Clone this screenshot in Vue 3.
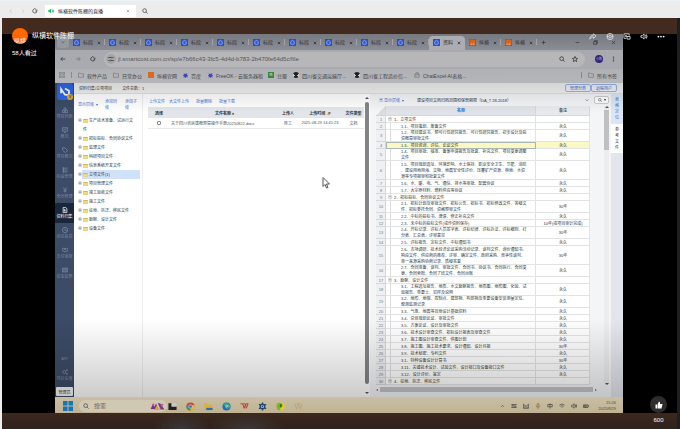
<script setup>
import { ref } from 'vue'

const icons = {
  back: 'M14 8H2M7 3L2 8l5 5',
  forward: 'M2 8h12M9 3l5 5-5 5',
  chevLeft: 'M10 3L5 8l5 5',
  chevRight: 'M6 3l5 5-5 5',
  chevDown: 'M3 6l5 5 5-5',
  chevUp: 'M3 11l5-5 5 5',
  reload: 'M13 4v4H9M13 8a5.5 5.5 0 1 1-2-4.5',
  search: 'M7 2a5 5 0 1 0 0 10A5 5 0 1 0 7 2M11 11l4 4',
  close: 'M3 3l10 10M13 3L3 13',
  plus: 'M8 2v12M2 8h12',
  minus: 'M2 8h12',
  restore: 'M2 5h9v9H2zM5 5V2h9v9h-3',
  star: 'M8 1l2 5 5 .5-4 3.500 1.500 5L8 12l-4.500 3L5 10 1 6.500 6 6z',
  folder: 'M1 3h5l2 2h7v9H1z',
  apps: 'M1 1h5v5H1zM10 1h5v5h-5zM1 10h5v5H1zM10 10h5v5h-5z',
  tune: 'M1 4h7M12 4h3M10 2v4M1 12h3M8 12h7M6 10v4',
  sites: 'M8 1l4 5H4zM1 9h6v6H1zM9 9h6v6H9z',
  chart: 'M1 2h14v9H1zM4 8l3-3 2 2 3-4M5 14h6',
  tag: 'M1 2h6l8 7-6 6-8-7zM4 5h1',
  list: 'M1 3h14M1 8h14M1 13h14M4 1v14',
  yen: 'M3 1l5 6 5-6M8 7v8M4 8h8M4 11h8',
  doc: 'M3 1h7l3 4v10H3zM6 5v6h4M6 8h4',
  clock: 'M8 1a7 7 0 1 0 0 14A7 7 0 1 0 8 1M8 4v5h4',
  hands: 'M0 5l5-2 3 2 3-2 5 2v5l-5 2-3 1-4-2-4-1zM5 8l3-3 4 4',
  money: 'M1 3h14v10H1zM5 3v10M11 3v10M8 6v4',
  gear: 'M6 4a4 4 0 1 0 0 8A4 4 0 1 0 6 4M13 1a2 2 0 1 0 0 4A2 2 0 1 0 13 1M13 11a2 2 0 1 0 0 4A2 2 0 1 0 13 11',
  share: 'M9 2l6 5-6 5V9C5 9 3 10 1 14c0-5 3-9 8-9z',
  target: 'M8 1a7 7 0 1 0 0 14A7 7 0 1 0 8 1M8 5a3 3 0 1 0 0 6A3 3 0 1 0 8 5M1 8h3M12 8h3',
  pip: 'M6 12H1V2h12v4M8 8h7v6H8zM4 5l3 3M7 5v3H4',
  speaker: 'M1 6h3l4-4v12l-4-4H1zM11 5q3 3 0 6M13 3q4 5 0 10',
  keyboard: 'M1 4h14M1 8h14M1 12h14M5 4v4M11 8v4',
  mail: 'M1 3l7 6 7-6v11H1zM5 14V9M11 14V9',
  mic: 'M6 2q2-2 4 0v6q-2 3-4 0zM3 7q1 5 5 5t5-5M8 12v4',
  ime: 'M2 4h12v6H2zM8 1v14',
  wifi: 'M1 6q7-7 14 0M4 9q4-4 8 0M7 12l1 1 1-1',
  battery: 'M1 5h12v7H1zM13 7h2v3M3 7h6v3H3z',
}

const tabs = [
  ...Array.from({ length: 10 }, () => ({ title: '标段', kind: 'blue' })),
  { title: '资料', kind: 'blue', active: true },
  { title: '纵横', kind: 'orange' },
  { title: '纵横', kind: 'orange' },
]

const nav = [
  { icon: 'sites', label: '项目列表' },
  { icon: 'chart', label: '概况' },
  { icon: 'tag', label: '项目概况' },
  { icon: 'list', label: '标段管理' },
  { icon: 'yen', label: '合同管理' },
  { icon: 'doc', label: '资料归集', active: true },
  { icon: 'clock', label: '动态投资' },
  { icon: 'hands', label: '支付审批' },
  { icon: 'money', label: '资金监管' },
]

const tree = [
  '生产技术准备、试运行文\n件', '招标投标、合同协议文件', '监理文件', '科研项目文件',
  '信息系统开发文件', '立项文件(1)', '项目管理文件', '竣工验收文件', '施工文件',
  '征地、拆迁、移民文件', '勘察、设计文件', '设备文件',
]

const Y = '永久'
const T = '30年'
const rows = [
  ['1、立项文件'],
  ['1.1、项目策划、筹备文件', Y],
  ['1.2、项目建议书、预可行性研究报告、可行性研究报告、初步设计及投\n资概算审批文件', Y],
  ['1.3、项目咨询、评估、论证文件', Y],
  ['1.4、项目审批、核准、备案申请报告及批复、补充文件、项目变更调整\n文件', Y],
  ['1.5、项目规划选址、环境影响、水土保持、职业安全卫生、节能、消防\n、建设用地用海、文物、地震安全性评价、压覆矿产资源、林地、水资\n源等专项报审和批复文件', Y],
  ['1.6、水、暖、电、气、通信、排水等审批、配套协议', Y],
  ['1.7、大宗原材料、燃料供应等协议', Y],
  ['2、招标投标、合同协议文件'],
  ['2.1、招标计划及审批文件、招标公告、招标书、招标修改文件、答疑文\n件、招标委托合同、资格预审文件', T],
  ['2.2、中标的投标书、澄清、修正补充文件', Y],
  ['2.3、未中标的投标文件(或作资料保存)', '10年(或项目审计完成)'],
  ['2.4、开标记录、评标人员签字表、评标纪律、评标办法、评标细则、打\n分表、汇总表、评审意见', T],
  ['2.5、评标报告、定标文件、中标通知书', Y],
  ['2.6、市场调研、技术经济论证采购活动记录、谈判文件、询价通知书、\n响应文件、供应商的推荐、评审、确定文件、政府采购、竞争性谈判、\n单一来源采购协商记录、质疑答复', T],
  ['2.7、合同准备、谈判、审批文件、合同书、协议书、合同执行、合同变\n更、合同索赔、合同了结文件、合同台账', Y],
  ['3、勘察、设计文件'],
  ['3.1、工程选址报告、地质、水文勘察报告、地质图、地形图、化验、试\n验报告、重要土、岩样及说明', Y],
  ['3.2、地形、地貌、控制点、建筑物、构筑物及重要设备安装测量定位、\n观测监测记录', Y],
  ['3.3、气象、地震等其他设计基础资料', Y],
  ['3.4、总体规划论证、审批文件', Y],
  ['3.5、方案论证、设计及审批文件', Y],
  ['3.6、技术设计审查文件、招标设计报表及审查文件', Y],
  ['3.7、施工图设计审查文件、供图计划', Y],
  ['3.8、施工图、施工技术要求、设计通知、设计月报', T],
  ['3.9、技术秘密、专利文件', Y],
  ['3.1、特种设备设计计算书', T],
  ['3.11、关键技术设计、试验文件、设计接口及设备接口文件', Y],
  ['3.12、设计评价、鉴定', Y],
  ['4、征地、拆迁、移民文件'],
]

const tray = ['chevUp', 'keyboard', 'mail', 'mic', 'ime', 'wifi', 'speaker', 'battery']
const liveTools = ['share', 'target', 'pip', 'speaker']
const lineCount = (text) => text.split('\n').length
const checked = ref(false)
const url = ref('jl.smartcost.com.cn/sp/e7b66c43-3fc5-4d4d-b783-2b470fe64d5c/file')
</script>

<template>
  <div class="page">
    <header class="topbar">
      <button class="ic pale" aria-label="后退"><svg viewBox="0 0 16 16"><path :d="icons.chevLeft" /></svg></button>
      <button class="ic pale" aria-label="前进"><svg viewBox="0 0 16 16"><path :d="icons.chevRight" /></svg></button>
      <button class="ic" aria-label="刷新"><svg viewBox="0 0 16 16"><path :d="icons.reload" /></svg></button>
      <div class="live-tab">
        <svg class="sound" viewBox="0 0 16 16"><path :d="icons.speaker" /></svg>
        <span>纵横软件陈棚的直播</span>
        <button class="ic small" aria-label="关闭"><svg viewBox="0 0 16 16"><path :d="icons.close" /></svg></button>
      </div>
      <button class="ic" aria-label="搜索"><svg viewBox="0 0 16 16"><path :d="icons.search" /></svg></button>
    </header>

    <main class="player">
      <section class="screen">
        <div class="tabstrip">
          <button class="tab-menu" aria-label="标签页"><svg viewBox="0 0 16 16"><path :d="icons.chevDown" /></svg></button>
          <div v-for="(t, i) in tabs" :key="i" class="tab" :class="{ active: t.active }">
            <svg class="fav" viewBox="0 0 16 16">
              <rect width="16" height="16" rx="3" :fill="t.kind === 'blue' ? '#305bd0' : '#d8651f'" />
              <path v-if="t.kind === 'blue'" d="M8 3l4 3v5l-4 2-4-2V6z" stroke="#e5ebff" />
              <path v-else d="M3 12h3M8 12h5M5 10v4M10 10v4" stroke="#f2d6bb" />
            </svg>
            <span>{{ t.title }}</span>
            <button class="tab-x" aria-label="关闭标签"><svg viewBox="0 0 16 16"><path :d="icons.close" /></svg></button>
          </div>
          <button class="tab-x new" aria-label="新标签"><svg viewBox="0 0 16 16"><path :d="icons.plus" /></svg></button>
          <div class="win">
            <svg viewBox="0 0 16 16"><path :d="icons.minus" /></svg>
            <svg viewBox="0 0 16 16"><path :d="icons.restore" /></svg>
            <svg viewBox="0 0 16 16"><path :d="icons.close" /></svg>
          </div>
        </div>

        <div class="address">
          <svg viewBox="0 0 16 16"><path :d="icons.back" /></svg>
          <svg class="dim" viewBox="0 0 16 16"><path :d="icons.forward" /></svg>
          <svg viewBox="0 0 16 16"><path :d="icons.reload" /></svg>
          <div class="omnibox">
            <span class="tune"><svg viewBox="0 0 16 16"><path :d="icons.tune" /></svg></span>
            <input v-model="url" aria-label="网址" />
            <svg viewBox="0 0 16 16"><path :d="icons.search" /></svg>
            <svg viewBox="0 0 16 16"><path :d="icons.star" /></svg>
          </div>
          <span class="profile">小陈</span>
          <svg class="dots" viewBox="0 0 16 16"><circle cx="8" cy="2" r="2" /><circle cx="8" cy="8" r="2" /><circle cx="8" cy="14" r="2" /></svg>
        </div>

        <nav class="bookmarks">
          <svg class="apps" viewBox="0 0 16 16"><path :d="icons.apps" /></svg>
          <i class="sep"></i>
          <a href="#" class="w35"><svg viewBox="0 0 16 16"><path :d="icons.folder" /></svg>软件产品</a>
          <a href="#" class="w35"><svg viewBox="0 0 16 16"><path :d="icons.folder" /></svg>日常办公</a>
          <a href="#" class="w35"><i class="sq orange"></i>纵横官网</a>
          <a href="#" class="w25"><i class="paw"></i>百度</a>
          <a href="#" class="w60"><i class="paw"></i>FreeOK - 云服务器租</a>
          <a href="#" class="w25"><i class="sq green">n</i>豆瓣</a>
          <a href="#" class="w61"><i class="globe"></i>四川省交通运输厅...</a>
          <a href="#" class="w60"><i class="globe"></i>四川省工程造价信...</a>
          <a href="#" class="w60"><svg viewBox="0 0 16 16"><path d="M2 6h12v8H2zM5 6V2h6v4M5 9v2M11 9v2" /></svg>ChatExcel-AI表格...</a>
          <i class="sep last"></i>
          <a href="#"><svg viewBox="0 0 16 16"><path :d="icons.folder" /></svg>所有书签</a>
        </nav>

        <div class="app">
          <aside class="side">
            <div class="logo">
              <svg viewBox="0 0 32 32"><path d="M7 19V9l9 13 9 1V13L16 8" /></svg><i>V</i>
            </div>
            <a v-for="n in nav" :key="n.label" href="#" class="nav-item" :class="{ active: n.active }">
              <svg viewBox="0 0 16 16"><path :d="icons[n.icon]" /></svg><span>{{ n.label }}</span>
            </a>
            <span class="api">API</span>
            <a href="#" class="nav-item"><svg viewBox="0 0 16 16"><path :d="icons.gear" /></svg><span>项目设置</span></a>
            <button class="admin">管理员</button>
          </aside>

          <div class="work">
            <div class="crumb">
              <span>资料归集/立项项目</span><span>文件总数：1</span>
              <div class="crumb-actions"><button>管理分类</button><button>远程用户</button></div>
            </div>
            <div class="panes">
              <section class="tree-pane">
                <div class="tree-tools">
                  <button>显示层级<b class="caret"></b></button><button>添加同级</button><button>添加子级</button>
                </div>
                <ul>
                  <li v-for="(t, i) in tree" :key="t" :class="{ tall: i === 0, selected: i === 5 }">
                    <i class="twist">+</i><span class="node"><i class="fold"></i>{{ t }}</span>
                  </li>
                </ul>
              </section>

              <section class="file-pane">
                <div class="file-tools"><button>上传文件</button><button>大文件上传</button><button class="gap">批量删除</button><button class="gap">批量下载</button></div>
                <table class="files">
                  <colgroup><col class="c1" /><col /><col class="c3" /><col class="c4" /><col class="c5" /></colgroup>
                  <thead><tr><th>选择</th><th>文件名称 ♦</th><th>上传人</th><th>上传时间 ↓F</th><th>文件类型</th></tr></thead>
                  <tbody><tr>
                    <td><input v-model="checked" type="checkbox" aria-label="选择文件" /></td>
                    <td class="name">关于四川省房建概预算操作手册20250822.docx</td>
                    <td>陈工</td><td>2025-08-29 14:41:23</td><td>文档</td>
                  </tr></tbody>
                </table>
              </section>
              <div class="vscroll"><b class="up"></b><i></i><b class="down"></b></div>

              <section class="std-pane">
                <div class="std-tools">
                  <button class="level">▣ 显示层级<b class="caret"></b></button>
                  <select aria-label="归档标准"><option>建设项目文档归档范围和保管期限（DA_T 28-2018）</option></select>
                  <svg viewBox="0 0 16 16"><path :d="icons.chevDown" /></svg>
                  <button class="find" aria-label="查找"><svg viewBox="0 0 16 16"><path :d="icons.search" /></svg><b class="caret"></b></button>
                </div>
                <div class="std-body">
                  <table class="std">
                    <colgroup><col class="num" /><col /><col class="remark" /></colgroup>
                    <thead><tr><th class="corner"></th><th class="on">名称</th><th>备注</th></tr></thead>
                    <tbody>
                      <tr v-for="(r, i) in rows" :key="i" :class="['lines-' + lineCount(r[0]), { current: i === 3, group: !r[1] }]">
                        <th>{{ i + 1 }}</th><td class="title"><i v-if="!r[1]">−</i>{{ r[0] }}</td><td>{{ r[1] }}</td>
                      </tr>
                    </tbody>
                  </table>
                  <div class="vthin"><b class="up"></b><i></i><b class="down"></b></div>
                </div>
                <div class="hscroll"><b class="lft"></b><i></i><b class="rgt"></b></div>
              </section>

              <aside class="vtabs"><button class="on">表格定位</button><button>参考文件</button></aside>
            </div>
          </div>
          <div class="shade"></div>
        </div>

        <footer class="taskbar">
          <svg class="start" viewBox="0 0 20 20"><path d="M0 0h9v9H0zM11 0h9v9h-9zM0 11h9v9H0zM11 11h9v9h-9z" /></svg>
          <label class="search">
            <svg viewBox="0 0 16 16"><path :d="icons.search" /></svg>
            <input placeholder="搜索" />
            <svg class="doodle" viewBox="0 0 42 26"><path d="M1 20L8 6l4 8 5-10 6 18zM22 3l7 1 12 18H29z" fill="#73358b" /><path d="M13 22l5-11 5 8 5-6 2 9z" fill="#e6a33d" /><circle cx="9" cy="7" r="3" fill="#d34778" /><circle cx="34" cy="9" r="4" fill="#ba5cba" /></svg>
          </label>
          <div class="task-icons">
            <svg viewBox="0 0 20 20"><path d="M1 3h7v7h11v8H1z" fill="#202124" /><path d="M8 3h11v7H8z" fill="#c9c9c9" /></svg>
            <svg viewBox="0 0 20 20"><circle cx="10" cy="10" r="9" fill="#cf4638" /><path d="M2 6a9 9 0 0 0 7 13l4-7-6-1z" fill="#2f9e52" /><path d="M9 19A9 9 0 0 0 19 7h-9l3 5z" fill="#e7b92e" /><circle cx="10" cy="10" r="4" fill="#3e74d4" stroke="#eee" stroke-width="1" /></svg>
            <svg viewBox="0 0 20 20"><path d="M1 3h7l2 3h9v12H1z" fill="#e0ae35" /><path d="M5 13h14v5H5z" fill="#2871b8" /></svg>
            <svg viewBox="0 0 20 20"><circle cx="10" cy="10" r="9" fill="#1673b4" /><path d="M2 6q9-9 17 3l-2 4H8q-1-6-6-7" fill="#35ac94" /><path d="M8 9q4-4 7 1H9q0 4 7 5-8 1-8-6" fill="#e1d7bd" /></svg>
            <svg viewBox="0 0 20 20"><path d="M1 4h5l3 10 3-8M7 4h5l2 10 4-10h-5" fill="none" stroke="#bd3226" stroke-width="2" /></svg>
            <svg viewBox="0 0 20 20"><path d="M10 1v18M2 5l16 10M18 5L2 15" stroke="#22456f" stroke-width="3" /><circle cx="10" cy="10" r="5" fill="#d3dbe1" stroke="#22456f" stroke-width="3" /><circle cx="10" cy="10" r="2" fill="#22456f" /></svg>
            <svg viewBox="0 0 20 20"><path d="M10 1a9 9 0 0 0 0 18z" fill="#7fb52b" /><path d="M10 1a9 9 0 0 1 0 18z" fill="#dfd315" /><path d="M9 4h5l-2 3 3 1-4 5-3-2z" fill="#277c26" /></svg>
            <svg viewBox="0 0 20 20"><path d="M2 4l4 12 4-11 4 11 4-12M6 4h8" fill="none" stroke="#c0a274" stroke-width="2" /></svg>
          </div>
          <div class="tray"><svg v-for="t in tray" :key="t" :class="t" viewBox="0 0 16 16"><path :d="icons[t]" /></svg></div>
          <div class="clock"><span>15:26</span><span>2025/8/29</span></div>
        </footer>
        <svg class="cursor" viewBox="0 0 16 24"><path d="M2 1v18l4-4 3 7 3-1-3-7h6z" /></svg>
      </section>

      <div class="host">
        <span class="avatar">纵横</span><strong>纵横软件陈棚</strong>
        <span class="views">58人看过</span>
      </div>
      <div class="live-tools">
        <button v-for="t in liveTools" :key="t" :aria-label="t"><svg viewBox="0 0 16 16"><path :d="icons[t]" /></svg></button>
        <button class="more" aria-label="更多"><svg viewBox="0 0 16 16"><circle cx="2" cy="8" r="2" /><circle cx="8" cy="8" r="2" /><circle cx="14" cy="8" r="2" /></svg></button>
      </div>
      <div class="like">
        <button aria-label="点赞"><svg viewBox="0 0 16 16"><path d="M1 7h3v8H1zM5 7l3-6q3 0 2 5h5l-2 9H5z" /></svg></button>
        <span>600</span>
      </div>
    </main>
  </div>
</template>

<style>
body { margin: 0; background: #ededed; }
</style>

<style scoped>
* { box-sizing: border-box; }
.page { height: 100vh; display: flex; flex-direction: column; font-family: "Liberation Sans", "Noto Sans CJK SC", sans-serif; font-size: 4px; color: #333; overflow: hidden; }
button, input, select { font: inherit; color: inherit; background: none; border: 0; padding: 0; margin: 0; min-width: 0; }
svg { display: block; flex: none; width: 6px; height: 6px; fill: none; stroke: currentColor; stroke-width: 2; }
i { font-style: normal; }
a { color: inherit; text-decoration: none; }

.topbar { height: 18px; flex: none; display: flex; align-items: center; gap: 6px; padding: 2px 8px 0; background: #ececec; border-top: 1px solid #eaf3f8; color: #444; }
.ic.pale { color: #c8c8c8; }
.topbar .ic { width: 6px; }
.live-tab { display: flex; align-items: center; gap: 4px; width: 91px; height: 12px; margin: 0 0 0 1px; padding: 0 4px 0 3px; background: #fff; font-size: 5px; color: #222; }
.live-tab .ic { margin-left: auto; color: #666; }
.live-tab .small svg { width: 4px; height: 4px; }
.live-tab .sound { color: #1cb860; fill: #1cb860; stroke-width: 1; }

.player { position: relative; flex: 1; min-height: 0; margin-left: 2px; padding: 16px 54px 16px 53px; border-right: 3px solid #1e1f21;
  background: radial-gradient(ellipse 30px 16px at 180px 100%, #39383a, transparent), radial-gradient(ellipse 40px 16px at 245px 100%, #3b3837, transparent), linear-gradient(#422a1f 0 16px, #000 16px calc(100% - 16px), #3c281e calc(100% - 16px), #2f211c 100%); }
.screen { position: relative; height: 100%; display: flex; flex-direction: column; background: #fff; }

.tabstrip { height: 16px; flex: none; display: flex; align-items: center; background: linear-gradient(#777980, #8b8d95); color: #2e2f33; font-size: 5px; }
.tab-menu { width: 12px; height: 11px; margin: 0 0 0 2px; display: grid; place-items: center; border-radius: 3px; background: #96989f; }
.tab-menu svg { width: 4px; height: 4px; }
.tab { flex: 0 1 36px; min-width: 0; height: 14px; align-self: end; display: flex; align-items: center; gap: 3px; padding: 0 4px 1px; white-space: nowrap; background: linear-gradient(#a2a4aa, #a2a4aa) 100% 3px / 1px 6px no-repeat; }
.tab.active { background: #acadb2; border-radius: 4px 4px 0 0; }
.tab .fav { stroke-width: 1; width: 7px; height: 7px; }
.tab span { line-height: 7px; }
.tab-x { margin-left: auto; }
.tab-x svg { width: 4px; height: 4px; stroke-width: 3; }
.tab-x.new { margin-left: 4px; }
.tab-x.new svg { width: 5px; height: 5px; stroke-width: 2; }
.win { display: flex; gap: 13px; margin-left: auto; padding-right: 7px; }
.win svg { width: 5px; height: 5px; }

.address { height: 19px; flex: none; display: flex; align-items: center; gap: 9px; padding: 0 7px 1px 5px; background: #a9aaaf; color: #333; }
.address .dim { color: #777; }
.omnibox { flex: 1; height: 15px; display: flex; align-items: center; gap: 7px; margin: 0 1px 0 -1px; padding: 0 7px 0 2px; border-radius: 8px; background: #b7b7ba; }
.tune { width: 10px; height: 10px; border-radius: 50%; display: grid; place-items: center; background: #a4a5a8; margin-right: -5px; }
.tune svg { width: 6px; height: 6px; }
.omnibox input { flex: 1; font-size: 6px; color: #54565a; outline: 0; }
.profile { width: 8px; height: 8px; margin: 0 -1px 0 0; border-radius: 50%; background: #302379; color: #ccc; font-size: 3px; line-height: 8px; text-align: center; }
.address .dots { fill: currentColor; stroke: none; width: 5px; }

.bookmarks { height: 14px; flex: none; display: flex; align-items: center; padding: 0 6px 2px 4px; background: linear-gradient(#b0b1b5, #b5b6ba); color: #444548; font-size: 5px; white-space: nowrap; }
.bookmarks a { display: flex; align-items: center; gap: 3px; }
.bookmarks svg { stroke-width: 1; }
.apps { margin-right: 6px; }
.sep { width: 1px; height: 6px; background: #898a8e; margin-right: 6px; }
.sep.last { margin-left: auto; }
.w35 { flex: 0 1 35px; } .w25 { flex: 0 1 25px; } .w60 { flex: 0 1 60px; } .w61 { flex: 0 1 61px; }
.sq { width: 6px; height: 6px; line-height: 5px; text-align: center; color: #fff; }
.orange { background: #d96924; }
.green { background: #33863e; }
.paw { width: 5px; height: 5px; border-radius: 50%; background: #3d45b9; border: 1px dotted #a8abd0; }
.globe { width: 6px; height: 6px; border-radius: 50%; background: conic-gradient(#222 0 20%, #ccc 20% 35%, #222 35% 65%, #ccc 65% 80%, #222 80%); }

.app { position: relative; flex: 1; min-height: 0; display: flex; background: #fff; }
.shade { position: absolute; inset: 0; pointer-events: none; background: linear-gradient(rgba(0,0,0,.13), transparent 30px, transparent 75%, rgba(0,0,0,.2)); }
.side { width: 19px; flex: none; display: flex; flex-direction: column; align-items: stretch; background: #3c4b66; color: #7c899f; overflow: hidden; }
.logo { position: relative; height: 17px; flex: none; margin: 0 1px 3px 2px; border-radius: 3px; background: #2e67e6; display: grid; place-items: center; }
.logo svg { width: 14px; height: 14px; color: #fff; stroke-width: 4; }
.logo i { position: absolute; right: 0; bottom: 0; width: 6px; height: 6px; border-radius: 50%; background: #dba93b; color: #3b2f16; font-size: 4px; line-height: 6px; text-align: center; }
.nav-item { height: 20px; flex: none; display: flex; flex-direction: column; align-items: center; justify-content: center; gap: 1px; line-height: 5px; white-space: nowrap; }
.nav-item svg { stroke-width: 2; }
.nav-item.active { background: #1a263c; color: #fff; }
.api { margin-top: auto; padding-bottom: 4px; text-align: center; }
.admin { height: 9px; flex: none; margin: 2px 1px 1px; background: #f6f6f6; color: #333; border-radius: 1px; }

.work { flex: 1; min-width: 0; display: flex; flex-direction: column; }
.crumb { height: 11px; flex: none; display: flex; align-items: center; gap: 10px; padding: 0 6px 0 5px; background: #f4f4f5; border-bottom: 1px solid #e2e2e3; }
.crumb-actions { display: flex; margin-left: auto; }
.crumb-actions button { width: 26px; height: 8px; color: #3e70cf; border: 1px solid #9cb9ec; border-radius: 2px; line-height: 5px; background: #f1f5fc; }
.panes { flex: 1; min-height: 0; display: flex; }

.tree-pane { width: 69px; flex: none; border-right: 1px solid #eee; }
.tree-tools { display: flex; align-items: center; gap: 6px; height: 22px; padding: 0 4px; color: #4278d6; line-height: 6px; }
.tree-tools button { flex: 0 0 14px; text-align: left; white-space: normal; }
.tree-tools button:first-child { flex-basis: 21px; white-space: nowrap; }
.caret { display: inline-block; margin-left: 2px; border: 1px solid transparent; border-top: 2px solid currentColor; border-bottom: 0; vertical-align: middle; }
ul { list-style: none; margin: 0; padding: 0 2px 0 4px; line-height: 9px; }
li { display: flex; height: 9px; }
li.tall { height: 18px; }
.twist { width: 4px; height: 4px; flex: none; margin: 2px 0; line-height: 4px; text-align: center; color: #666; background: #ccc; border-radius: 50%; }
.node { flex: 1; padding: 0 3px 0 1px; white-space: pre; }
.selected .node { background: #cfe2fa; }
.fold { display: inline-block; width: 5px; height: 4px; margin-right: 1px; background: #f2dc7c; border: 1px solid #e9d28a; border-top-color: #cfb55d; vertical-align: middle; }

.file-pane { flex: 1; min-width: 0; padding: 0 0 0 5px; }
.file-tools { display: flex; gap: 4px; height: 13px; padding-left: 1px; align-items: center; color: #3b72d2; }
.file-tools .gap { margin-left: 3px; }
table { border-collapse: collapse; table-layout: fixed; width: 100%; }
th, td { padding: 0; text-align: center; white-space: nowrap; overflow: hidden; }
.files th { height: 11px; background: #e2e5ea; color: #333; }
.files td { height: 10px; color: #555; border: 1px solid #e9e9e9; border-width: 0 0 1px; }
.files .name { text-align: left; padding-left: 1px; }
.files input { appearance: none; display: block; width: 4px; height: 4px; margin: 0 auto; border: 1px solid #8b8b8b; border-radius: 1px; }
.c1 { width: 22px; } .c3 { width: 18px; } .c4 { width: 46px; } .c5 { width: 21px; }

.vscroll { width: 6px; flex: none; display: flex; flex-direction: column; align-items: center; gap: 3px; padding: 3px 0; }
.vscroll i { width: 4px; flex: 1; margin-bottom: 5px; border-radius: 2px; background: #828486; }
.up, .down { border: 2px solid transparent; border-bottom-color: #555; border-top: 0; }
.down { border-bottom: 0; border-top: 2px solid #555; }

.std-pane { flex: 0 0 241px; display: flex; flex-direction: column; padding: 0 2px 0 6px; background: #f4f5f7; min-width: 0; }
.std-tools { height: 12px; flex: none; display: flex; align-items: center; gap: 5px; }
.level { width: 36px; color: #3b72d2; text-align: left; padding-left: 3px; white-space: nowrap; }
.std-tools select { flex: 1; appearance: none; }
.std-tools svg { width: 4px; height: 4px; }
.find { display: flex; align-items: center; justify-content: center; width: 15px; height: 8px; border: 1px solid #ccc; border-radius: 2px; background: #fff; }
.std-body { flex: 1; min-height: 0; display: flex; justify-content: space-between; }
.std { width: 214px; flex: none; align-self: start; background: #fff; line-height: 6px; }
.std .num { width: 10px; } .std .remark { width: 54px; }
.std th { background: #eff0f3; color: #777; font-weight: normal; box-shadow: inset -1px -1px #d6d7da; }
.std thead th { height: 10px; background: #e9eaed; color: #555; font-weight: bold; }
.std thead .on { background: #dfe3e9; color: #3b72d2; }
.std thead .corner { background: linear-gradient(135deg, #f4f5f7 50%, #ddd 50%); }
.std td { box-shadow: inset -1px -1px #e2e3e5; }
.std .title { padding-left: 15px; text-align: left; white-space: pre; background: linear-gradient(#ddd, #ddd) 4px 0 / 1px 100% no-repeat; }
.std .group .title { padding-left: 2px; }
.group .title i { display: inline-block; width: 4px; height: 4px; margin-right: 2px; background: #ddd; line-height: 4px; text-align: center; vertical-align: middle; }
.lines-1 > * { height: 7px; }
.lines-2 > * { height: 12px; }
.lines-3 > * { height: 19px; }
.current td { background: #fbf8c5; }
.std .current .title { background: #fbf8c5; box-shadow: inset 0 0 0 1px #a8b7b3; }
.vthin { width: 5px; display: flex; flex-direction: column; align-items: center; gap: 2px; background: #ededee; }
.vthin i { width: 5px; height: 40px; background: #bfc0c2; margin-bottom: auto; }
.hscroll { height: 12px; flex: none; display: flex; align-items: center; gap: 2px; padding: 0 12px 3px 0; }
.hscroll i { flex: 1; height: 5px; background: #c2c3c5; }
.lft, .rgt { border: 1px solid transparent; border-right: 2px solid #666; border-left: 0; }
.rgt { border-right: 0; border-left: 2px solid #666; }
.vtabs { width: 12px; flex: none; background: #e2e5eb; display: flex; flex-direction: column; gap: 1px; }
.vtabs button { height: 29px; padding: 0 4px; line-height: 6px; background: #fff; word-break: break-all; }
.vtabs .on { background: #dbe5f5; color: #3b72d2; }

.taskbar { height: 16px; flex: none; display: flex; align-items: center; padding: 2px 7px 0 8px; background: linear-gradient(#c9bea4, #c0b394); color: #4b4a47; }
.start { width: 10px; height: 10px; fill: #1675b5; stroke: none; }
.search { display: flex; align-items: center; gap: 5px; width: 88px; height: 12px; margin-left: 6px; padding: 0 2px 0 4px; border-radius: 6px; background: #d1c8b4; }
.search input { flex: 1; font-size: 6px; }
.search input::placeholder { color: #66645f; opacity: 1; }
.search .doodle { width: 15px; height: 9px; stroke: none; }
.task-icons { display: flex; gap: 9px; margin-left: 1px; }
.task-icons svg { width: 9px; height: 9px; stroke: none; }
.tray { display: flex; gap: 6px; margin-left: auto; margin-right: 9px; }
.tray .mic { color: #9a6f32; }
.tray .chevUp { width: 5px; }
.clock { display: flex; flex-direction: column; align-items: flex-end; line-height: 6px; font-size: 4px; }
.cursor { position: absolute; left: 267px; top: 143px; width: 8px; height: 12px; fill: #fff; stroke: #555; }

.host { position: absolute; left: 10px; top: 10px; display: grid; grid-template-columns: 16px auto; column-gap: 4px; row-gap: 5px; align-items: center; color: #fff; white-space: nowrap; }
.avatar { width: 16px; height: 16px; padding-top: 9px; border-radius: 50%; overflow: hidden; background: #ff6900; font-size: 6px; line-height: 8px; text-align: center; }
.host strong { font-size: 7px; font-weight: normal; line-height: 10px; }
.views { grid-column: 1 / 3; font-size: 6px; line-height: 8px; }
.live-tools { position: absolute; right: 12px; top: 15px; display: flex; gap: 9px; color: #ddd; }
.live-tools svg { width: 8px; height: 7px; stroke-width: 2; }
.live-tools .more svg { fill: #fff; stroke: none; }
.like { position: absolute; right: 10px; bottom: 5px; display: flex; flex-direction: column; align-items: center; gap: 3px; color: #fff; font-size: 6px; line-height: 8px; }
.like button { width: 17px; height: 17px; display: grid; place-items: center; border-radius: 50%; background: #2d2d2d; }
.like svg { width: 8px; height: 8px; fill: #fff; stroke: none; }
</style>
